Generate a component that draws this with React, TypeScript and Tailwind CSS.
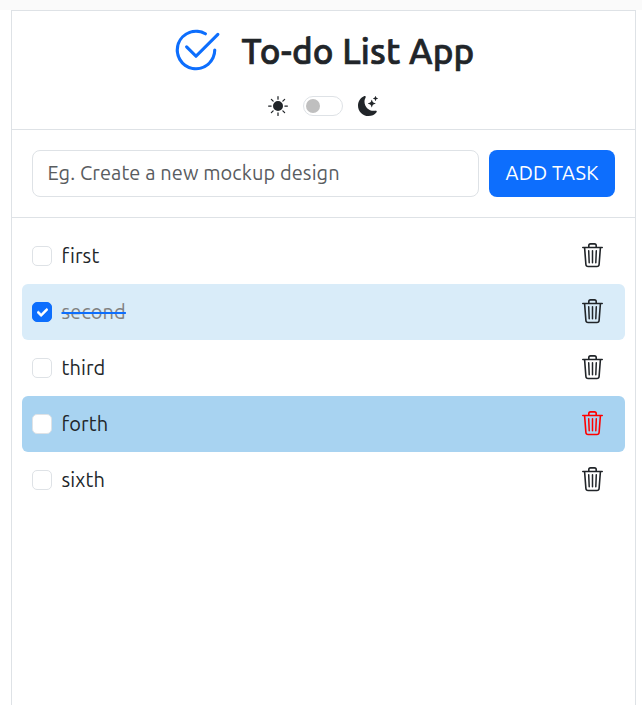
import { useState } from "react";
import { BsCheck2Circle, BsMoonStarsFill, BsSunFill } from "react-icons/bs";
import { FaCheck } from "react-icons/fa";

type Task = { name: string; done: boolean; active: boolean };

const initial: Task[] = [
  { name: "first", done: false, active: false },
  { name: "second", done: true, active: false },
  { name: "third", done: false, active: false },
  { name: "forth", done: false, active: true },
  { name: "sixth", done: false, active: false },
];

function TrashIcon({ className }: { className: string }) {
  return (
    <svg
      viewBox="0 0 22 26"
      className={`h-[26px] w-[22px] ${className}`}
      fill="none"
      stroke="currentColor"
      strokeWidth="1.6"
      strokeLinecap="round"
      strokeLinejoin="round"
    >
      <path d="M0.8 5.5H20.2" />
      <path d="M6.8 5.3V3.6Q6.8 1.9 8.5 1.9H12.5Q14.2 1.9 14.2 3.6V5.3" />
      <path d="M2.6 5.7L3.9 22.5Q4.1 24.5 6.1 24.5H14.9Q16.9 24.5 17.1 22.5L18.4 5.7" />
      <path d="M6.7 8.8L7.2 20.8M10.5 8.8V20.8M14.3 8.8L13.8 20.8" strokeWidth="1.5" />
    </svg>
  );
}

function TaskRow({ task, onToggle }: { task: Task; onToggle: () => void }) {
  const background = task.active ? "bg-[#a8d3f1]" : task.done ? "bg-[#d9ecf9]" : "bg-white";
  return (
    <li className={`flex h-14 items-center rounded-md pl-2.5 pr-[21px] ${background}`}>
      <button
        onClick={onToggle}
        className={`flex size-5 shrink-0 items-center justify-center rounded-[5px] border ${
          task.done ? "border-[#0d6efd] bg-[#0d6efd] text-white" : "border-[#dee2e6] bg-white"
        }`}
      >
        {task.done && <FaCheck size={11} stroke="currentColor" strokeWidth={24} />}
      </button>
      <span
        className={`ml-[9.5px] text-[20px] leading-[30px] tracking-[0.1px] ${
          task.done ? "text-[#808080] line-through decoration-[#0d6efd] decoration-2" : ""
        }`}
      >
        {task.name}
      </span>
      <TrashIcon className={`mb-[2px] ml-auto ${task.active ? "text-[#ff0000]" : ""}`} />
    </li>
  );
}

export default function App() {
  const [tasks, setTasks] = useState(initial);
  const toggle = (i: number) => setTasks(tasks.map((t, j) => (i === j ? { ...t, done: !t.done } : t)));

  return (
    <div className="h-[705px] overflow-hidden bg-white font-['Ubuntu','Noto_Sans',sans-serif] text-[#212529]">
      <div className="h-2.5 bg-[#fafafa]" />
      <main className="ml-[11px] h-[720px] w-[625px] border border-[#dee2e6]">
        <header className="flex h-[119px] flex-col items-center border-b border-[#dee2e6]">
          <div className="mt-[19px] flex h-[43px] w-full items-center pl-[159px]">
            <BsCheck2Circle size={50} className="-mt-[4px] shrink-0 text-[#0d6efd]" />
            <h1 className="ml-[20.5px] whitespace-nowrap text-[35px] font-medium leading-[43px] tracking-[0.2px] [-webkit-text-stroke:0.7px_#212529]">
              To-do List App
            </h1>
          </div>
          <div className="mr-0.5 mt-[23px] flex items-center">
            <BsSunFill size={20} />
            <div className="ml-[15px] flex h-5 w-10 items-center rounded-full border border-[#dee2e6] pl-[2px]">
              <span className="size-3.5 rounded-full bg-[#bfbfbf]" />
            </div>
            <BsMoonStarsFill size={20} className="ml-[15px]" />
          </div>
        </header>
        <form className="flex h-[88px] gap-2.5 border-b border-[#dee2e6] px-5 pt-5" onSubmit={(e) => e.preventDefault()}>
          <input
            placeholder="Eg. Create a new mockup design"
            className="h-[47px] w-[447px] rounded-lg border border-[#dee2e6] px-[14.5px] pb-[3px] text-[20px] tracking-[0.1px] outline-none placeholder:text-[#595c5f]"
          />
          <button className="h-[47px] w-[126px] whitespace-nowrap rounded-lg bg-[#0d6efd] pb-0.5 text-[20px] tracking-[0.15px] text-white">
            ADD TASK
          </button>
        </form>
        <ul className="p-2.5">
          {tasks.map((task, i) => (
            <TaskRow key={task.name} task={task} onToggle={() => toggle(i)} />
          ))}
        </ul>
      </main>
    </div>
  );
}
